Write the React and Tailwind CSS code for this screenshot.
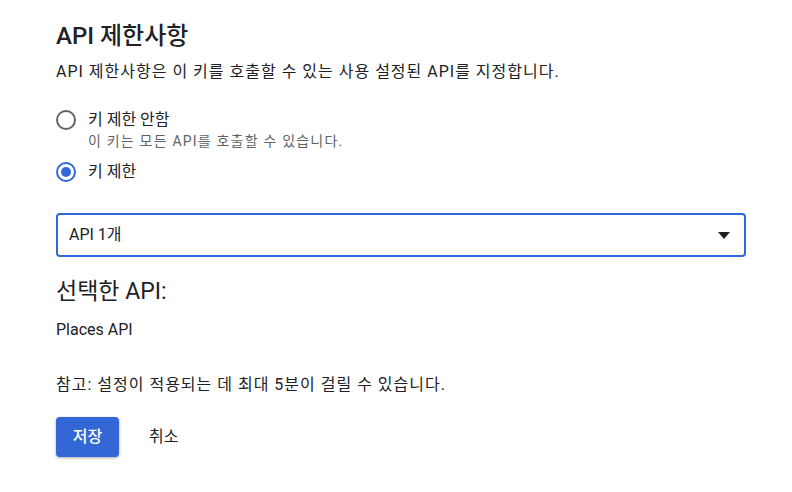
import React, { useState } from 'react';

const App = () => {
  const [restrict, setRestrict] = useState('restrict');

  return (
    <div className="w-[792px] h-[492px] bg-white text-[#202124] px-[56px] pt-[21px] font-['Roboto','Noto_Sans_CJK_KR',sans-serif]">
      <h1 className="text-[24px] leading-[30px] font-medium">API 제한사항</h1>
      <p className="text-[16px] leading-[24px] tracking-[1px] mt-[9px]">API 제한사항은 이 키를 호출할 수 있는 사용 설정된 API를 지정합니다.</p>

      <div className="mt-[24px] flex flex-col">
        <label className="flex items-start gap-[12px] cursor-pointer" onClick={() => setRestrict('none')}>
          <span className={`mt-[2px] w-[20px] h-[20px] rounded-full border-2 flex items-center justify-center ${restrict === 'none' ? 'border-[#3367d6]' : 'border-[#5f6368]'}`}>
            {restrict === 'none' && <span className="w-[10px] h-[10px] rounded-full bg-[#3367d6]" />}
          </span>
          <span className="flex flex-col">
            <span className="text-[16px] leading-[24px]">키 제한 안함</span>
            <span className="text-[14px] leading-[18px] tracking-[1.2px] text-[#5f6368]">이 키는 모든 API를 호출할 수 있습니다.</span>
          </span>
        </label>
        <label className="flex items-center gap-[12px] mt-[10px] cursor-pointer" onClick={() => setRestrict('restrict')}>
          <span className={`w-[20px] h-[20px] rounded-full border-2 flex items-center justify-center ${restrict === 'restrict' ? 'border-[#3367d6]' : 'border-[#5f6368]'}`}>
            {restrict === 'restrict' && <span className="w-[10px] h-[10px] rounded-full bg-[#3367d6]" />}
          </span>
          <span className="text-[16px] leading-[24px]">키 제한</span>
        </label>
      </div>

      <div className="mt-[29px] w-[690px] h-[44px] border-2 border-[#3367d6] rounded-[4px] flex items-center justify-between pl-[11px] pr-[14px]">
        <span className="text-[16px]">API 1개</span>
        <svg width="12" height="7" viewBox="0 0 12 7"><path d="M0 0h12L6 7z" fill="#202124" /></svg>
      </div>

      <h2 className="text-[23px] leading-[30px] mt-[20px]">선택한 API:</h2>
      <p className="text-[16px] leading-[24px] mt-[11px]">Places API</p>

      <p className="text-[16px] leading-[24px] tracking-[1px] mt-[31px]">참고: 설정이 적용되는 데 최대 5분이 걸릴 수 있습니다.</p>

      <div className="mt-[20px] flex items-center gap-[12px]">
        <button className="w-[63px] h-[40px] rounded-[4px] bg-[#3367d6] text-white text-[16px] font-medium shadow-[0_1px_3px_rgba(0,0,0,0.35)]">저장</button>
        <button className="px-[18px] h-[40px] text-[16px] text-[#202124]">취소</button>
      </div>
    </div>
  );
};

export default App;
